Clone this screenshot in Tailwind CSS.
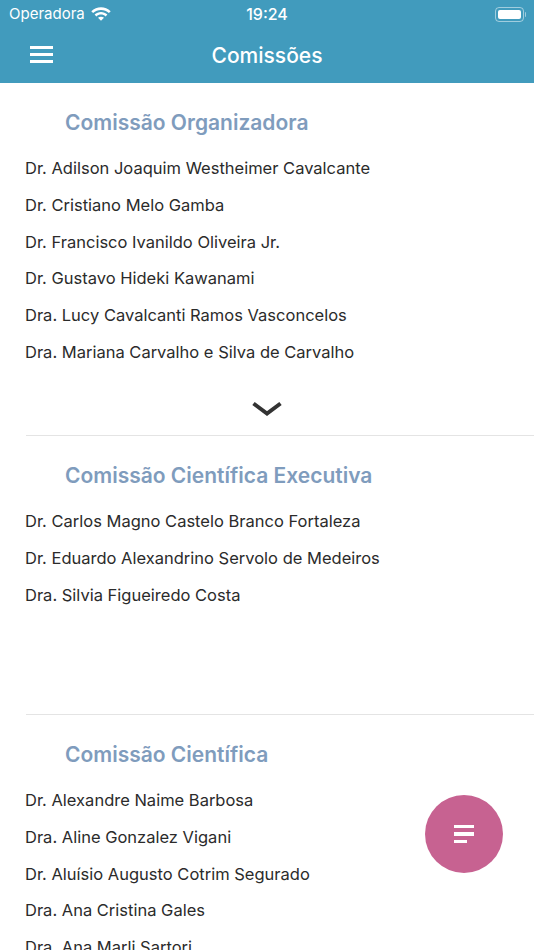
<!DOCTYPE html>
<html lang="pt">
<head>
  <meta charset="utf-8" />
  <title>Comissões</title>
  <script src="https://cdn.jsdelivr.net/npm/@tailwindcss/browser@4"></script>
  <meta name="viewport" content="width=device-width,initial-scale=1" />
</head>
<body class="relative h-[950px] w-[534px] overflow-hidden bg-white font-['Inter',sans-serif] text-[#2b2b2b]">

  <!-- top bar -->
  <header class="h-[83px] bg-[#419bbd] text-white">
    <div class="relative flex h-[28px] items-center justify-between pl-[9px] pr-[8px] text-[15px]">
      <div class="flex items-center gap-[6px]">
        <span>Operadora</span>
        <svg class="mb-[2px]" width="20" height="15" viewBox="0 0 20 15" fill="white">
          <path d="M0.3 5.2C5.6 -0.2 14.4 -0.2 19.7 5.2L17.9 7.1C13.6 2.8 6.4 2.8 2.1 7.1Z" />
          <path d="M3.6 8.6C7.1 5.2 12.9 5.2 16.4 8.6L14.6 10.4C12 8 8 8 5.4 10.4Z" />
          <path d="M7 11.8C8.7 10.4 11.3 10.4 13 11.8L10 14.8Z" />
        </svg>
      </div>
      <span class="absolute left-0 right-0 text-center text-[16px] font-medium">19:24</span>
      <div class="flex items-center">
        <div class="flex h-[15px] w-[29px] items-center rounded-[4px] border border-white/50 p-[2px]">
          <div class="h-full w-full rounded-[2px] bg-white"></div>
        </div>
        <div class="ml-[1px] h-[5px] w-[1px] rounded-r bg-white/50"></div>
      </div>
    </div>
    <div class="relative flex h-[55px] items-center justify-center">
      <div class="absolute left-[30px] top-[18px] flex w-[23px] flex-col gap-[4.5px]">
        <div class="h-[2.5px] bg-white"></div>
        <div class="h-[2.5px] bg-white"></div>
        <div class="h-[2.5px] bg-white"></div>
      </div>
      <h1 class="text-[21px] font-medium">Comissões</h1>
    </div>
  </header>

  <main>
    <section class="h-[352px]">
      <h2 class="flex h-[67.5px] items-end pb-[12px] pl-[65px] text-[21px] font-semibold text-[#7f9cbd]">Comissão Organizadora</h2>
      <ul class="pl-[25px] text-[16.5px]">
        <li class="flex h-[36.67px] items-center">Dr. Adilson Joaquim Westheimer Cavalcante</li>
        <li class="flex h-[36.67px] items-center">Dr. Cristiano Melo Gamba</li>
        <li class="flex h-[36.67px] items-center">Dr. Francisco Ivanildo Oliveira Jr.</li>
        <li class="flex h-[36.67px] items-center">Dr. Gustavo Hideki Kawanami</li>
        <li class="flex h-[36.67px] items-center">Dra. Lucy Cavalcanti Ramos Vasconcelos</li>
        <li class="flex h-[36.67px] items-center">Dra. Mariana Carvalho e Silva de Carvalho</li>
      </ul>
      <div class="flex justify-center pt-[31px]">
        <svg width="32" height="16" viewBox="0 0 32 16" fill="none" stroke="#333333" stroke-width="4">
          <path d="M2.5 2.5 16 12.5 29.5 2.5" />
        </svg>
      </div>
    </section>

    <section class="ml-[26px] h-[279px] border-t border-[#e4e4e4]">
      <h2 class="flex h-[67.5px] items-end pb-[12px] pl-[39px] text-[21px] font-semibold text-[#7f9cbd]">Comissão Científica Executiva</h2>
      <ul class="-ml-px text-[16.5px]">
        <li class="flex h-[36.67px] items-center">Dr. Carlos Magno Castelo Branco Fortaleza</li>
        <li class="flex h-[36.67px] items-center">Dr. Eduardo Alexandrino Servolo de Medeiros</li>
        <li class="flex h-[36.67px] items-center">Dra. Silvia Figueiredo Costa</li>
      </ul>
    </section>

    <section class="ml-[26px] border-t border-[#e4e4e4]">
      <h2 class="flex h-[67.5px] items-end pb-[12px] pl-[39px] text-[21px] font-semibold text-[#7f9cbd]">Comissão Científica</h2>
      <ul class="-ml-px text-[16.5px]">
        <li class="flex h-[36.67px] items-center">Dr. Alexandre Naime Barbosa</li>
        <li class="flex h-[36.67px] items-center">Dra. Aline Gonzalez Vigani</li>
        <li class="flex h-[36.67px] items-center">Dr. Aluísio Augusto Cotrim Segurado</li>
        <li class="flex h-[36.67px] items-center">Dra. Ana Cristina Gales</li>
        <li class="flex h-[36.67px] items-center">Dra. Ana Marli Sartori</li>
      </ul>
    </section>
  </main>

  <!-- floating button -->
  <button class="absolute left-[425px] top-[795px] flex h-[78px] w-[78px] flex-col items-start justify-center gap-[4px] rounded-full bg-[#c76291] pl-[29px]">
    <span class="h-[3.5px] w-[20px] bg-white"></span>
    <span class="h-[3.5px] w-[20px] bg-white"></span>
    <span class="h-[3.5px] w-[13px] bg-white"></span>
  </button>
</body>
</html>
